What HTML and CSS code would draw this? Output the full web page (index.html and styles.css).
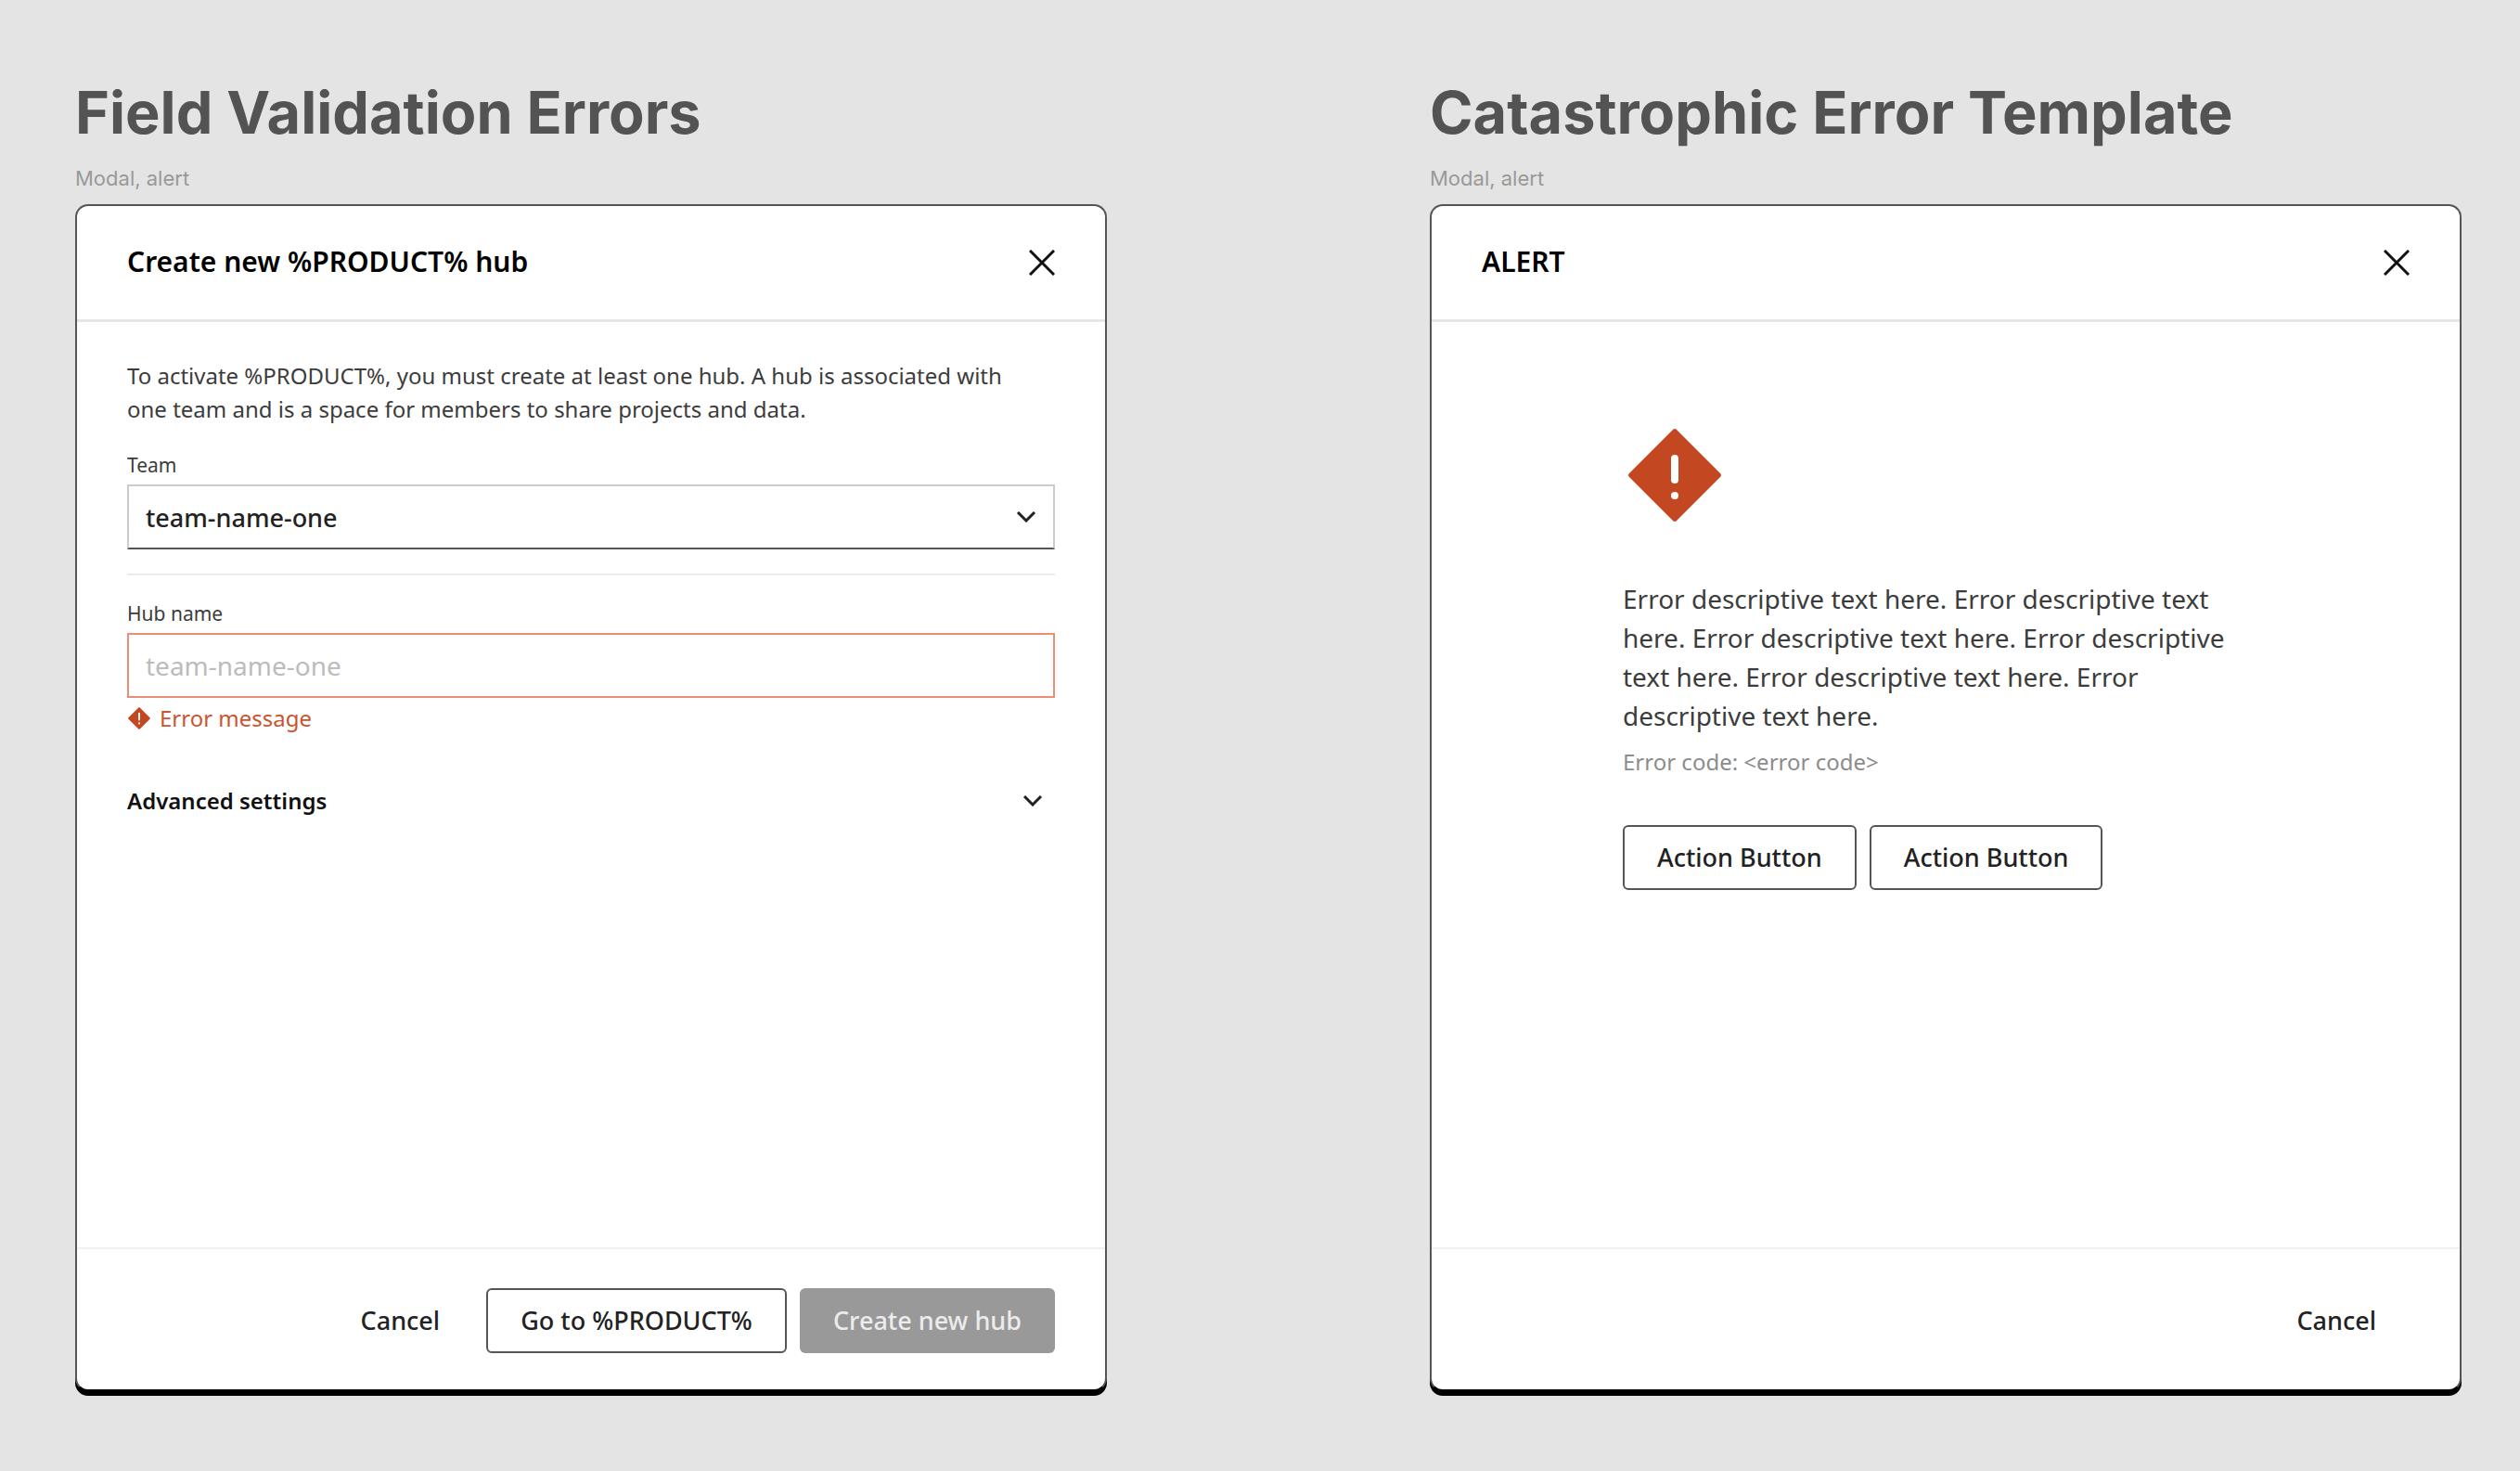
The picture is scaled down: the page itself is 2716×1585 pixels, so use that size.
FILE: index.html
```html
<!DOCTYPE html>
<html lang="en">
<head>
<meta charset="utf-8">
<meta name="viewport" content="width=device-width, initial-scale=1">
<title>Hub creation error states</title>
<link rel="stylesheet" href="styles.css">
</head>
<body>
<main class="board">
  <section class="sample">
    <h1 class="sample-title">Field Validation Errors</h1>
    <p class="sample-note">Modal, alert</p>
    <form class="modal" aria-labelledby="hub-title">
      <header class="modal-header">
        <h2 class="modal-title" id="hub-title">Create new %PRODUCT% hub</h2>
        <button class="close" type="button" aria-label="Close">
          <svg class="close-icon" viewBox="0 0 28 28" aria-hidden="true"><path d="M1 1l26 26M27 1L1 27"/></svg>
        </button>
      </header>
      <div class="modal-body">
        <p class="intro">To activate %PRODUCT%, you must create at least one hub. A hub is associated with one team and is a space for members to share projects and data.</p>
        <div class="field field-team">
          <label class="label" for="team">Team</label>
          <div class="select-wrap">
            <select class="control select" id="team"><option>team-name-one</option></select>
            <svg class="chevron select-chevron" viewBox="0 0 22 12" aria-hidden="true"><path d="M2 1l9 9 9-9"/></svg>
          </div>
        </div>
        <hr class="divider">
        <div class="field">
          <label class="label" for="hub">Hub name</label>
          <input class="control input-error" id="hub" type="text" placeholder="team-name-one" aria-invalid="true" aria-describedby="hub-error">
        </div>
        <p class="error" id="hub-error">
          <svg class="error-icon" viewBox="0 0 100 100" aria-hidden="true"><path class="diamond" d="M47 2q3-3 6 0l45 45q3 3 0 6L53 98q-3 3-6 0L2 53q-3-3 0-6z"/><path class="mark" d="M50 28v28M50 72v1"/></svg>
          Error message
        </p>
        <button class="advanced" type="button" aria-expanded="false">
          Advanced settings
          <svg class="chevron" viewBox="0 0 22 12" aria-hidden="true"><path d="M2 1l9 9 9-9"/></svg>
        </button>
      </div>
      <footer class="modal-footer">
        <button class="button button-plain" type="button">Cancel</button>
        <button class="button button-outline" type="button">Go to %PRODUCT%</button>
        <button class="button button-primary" type="submit" disabled>Create new hub</button>
      </footer>
    </form>
  </section>

  <section class="sample">
    <h1 class="sample-title">Catastrophic Error Template</h1>
    <p class="sample-note">Modal, alert</p>
    <div class="modal" role="alertdialog" aria-labelledby="alert-title">
      <header class="modal-header">
        <h2 class="modal-title" id="alert-title">ALERT</h2>
        <button class="close" type="button" aria-label="Close">
          <svg class="close-icon" viewBox="0 0 28 28" aria-hidden="true"><path d="M1 1l26 26M27 1L1 27"/></svg>
        </button>
      </header>
      <div class="modal-body alert-body">
        <svg class="alert-icon" viewBox="0 0 100 100" aria-hidden="true"><path class="diamond" d="M48 1q2-2 4 0l47 47q2 2 0 4L52 99q-2 2-4 0L1 52q-2-2 0-4z"/><path class="mark" d="M50 32v23"/><circle class="dot" cx="50" cy="72" r="4"/></svg>
        <p class="alert-text">Error descriptive text here. Error descriptive text here. Error descriptive text here. Error descriptive text here. Error descriptive text here. Error descriptive text here.</p>
        <p class="alert-code">Error code: &lt;error code&gt;</p>
        <div class="alert-actions">
          <button class="button button-outline" type="button">Action Button</button>
          <button class="button button-outline" type="button">Action Button</button>
        </div>
      </div>
      <footer class="modal-footer">
        <button class="button button-plain" type="button">Cancel</button>
      </footer>
    </div>
  </section>
</main>
</body>
</html>
```
FILE: styles.css
```css
* { box-sizing: border-box; }

body {
  margin: 0;
  background: #e4e4e4;
  color: #3c3c3c;
  font-family: "Noto Sans", "Open Sans", sans-serif;
  font-size: 24px;
}

h1, h2, p { margin: 0; }

button, input, select {
  font-family: inherit;
  margin: 0;
}

.board {
  display: grid;
  grid-template-columns: 1fr 1fr;
  gap: 348px;
  padding: 81px 63px 81px 81px;
}

.sample-title {
  font: 700 63px/80px Inter, sans-serif;
  color: #535353;
}

.sample-note {
  margin-top: 17px;
  padding-bottom: 14px;
  font: 400 22px/28px Inter, sans-serif;
  color: #999;
}

.modal {
  display: flex;
  flex-direction: column;
  min-height: 1279px;
  background: #fff;
  border: 2px solid #555;
  border-bottom-color: #000;
  border-radius: 14px;
  box-shadow: 0 5px 0 #000;
}

.modal-header {
  display: flex;
  align-items: center;
  justify-content: space-between;
  height: 125px;
  padding: 0 54px;
  border-bottom: 3px solid #e6e6e6;
}

.modal-title {
  padding-bottom: 2px;
  font-size: 30px;
  line-height: 40px;
  font-weight: 600;
  color: #000;
}

.close {
  display: flex;
  padding: 0;
  border: 0;
  background: none;
}

.close-icon {
  width: 28px;
  height: 28px;
  fill: none;
  stroke: #111;
  stroke-width: 3;
}

.modal-body {
  flex: 1;
  padding: 40px 54px;
}

.intro {
  padding-right: 32px;
  line-height: 36px;
}

.field {
  display: flex;
  flex-direction: column;
}

.field-team { margin-top: 28px; }

.label {
  font-size: 21px;
  line-height: 28px;
  padding-bottom: 7px;
}

.select-wrap { position: relative; }

.control {
  display: block;
  width: 100%;
  height: 70px;
  padding: 0 18px;
  border: 2px solid #ccc;
  border-radius: 0;
  background: #fff;
  font-size: 28px;
  color: #222;
}

.select {
  appearance: none;
  border-bottom-color: #555;
  font-size: 27px;
  font-weight: 500;
}

.select-chevron {
  position: absolute;
  top: 29px;
  right: 20px;
}

.chevron {
  width: 22px;
  height: 12px;
  fill: none;
  stroke: #222;
  stroke-width: 3;
}

.divider {
  height: 2px;
  margin: 26px 0 27px;
  border: 0;
  background: #ebebeb;
}

.input-error { border-color: #e98f78; }

.input-error::placeholder {
  color: #bcbcbc;
  opacity: 1;
}

.error {
  display: flex;
  align-items: center;
  gap: 10px;
  margin-top: 4px;
  padding-left: 1px;
  line-height: 36px;
  color: #cc5530;
}

.error-icon {
  width: 24px;
  height: 24px;
}

.diamond { fill: #c34822; }

.mark {
  fill: none;
  stroke: #fff;
  stroke-width: 8;
  stroke-linecap: round;
}

.dot { fill: #fff; }

.advanced {
  display: flex;
  align-items: center;
  justify-content: space-between;
  width: 100%;
  margin-top: 53px;
  padding: 0 13px 0 0;
  border: 0;
  background: none;
  font-size: 24px;
  line-height: 36px;
  font-weight: 600;
  color: #111;
}

.modal-footer {
  display: flex;
  justify-content: flex-end;
  gap: 14px;
  padding: 42px 54px 39px;
  border-top: 2px solid #f0f0f0;
}

.button {
  height: 70px;
  padding: 0 34px 2px;
  border: 2px solid transparent;
  border-radius: 6px;
  background: none;
  font-size: 27px;
  font-weight: 500;
  color: #222;
}

.button-outline {
  padding: 0 35px 2px;
  border-color: #555;
}

.button-primary {
  background: #999;
  color: #ececec;
}

.alert-body { padding: 115px 250px 40px 206px; }

.alert-icon {
  display: block;
  width: 100px;
  height: 100px;
  margin-left: 6px;
}

.alert-text {
  margin-top: 62px;
  font-size: 28px;
  line-height: 42px;
}

.alert-code {
  margin-top: 11px;
  line-height: 36px;
  color: #8c8c8c;
}

.alert-actions {
  display: flex;
  gap: 14px;
  margin-top: 50px;
}
```
